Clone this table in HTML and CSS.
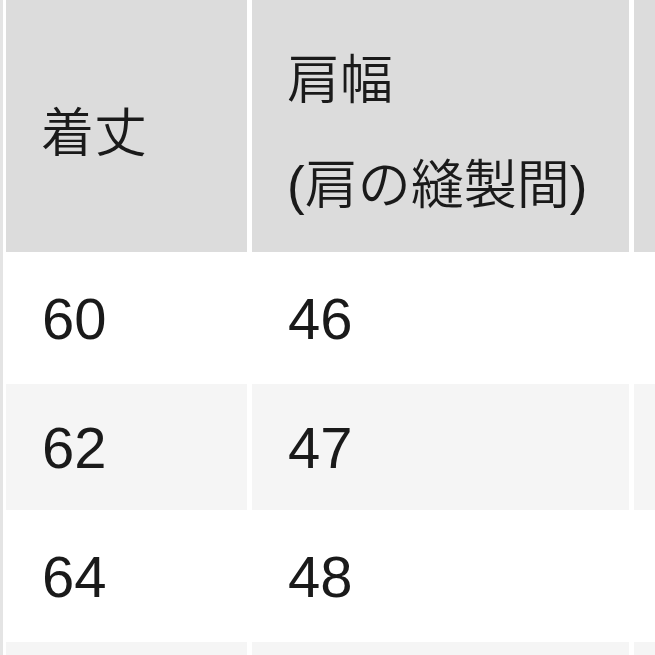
FILE: index.html
```html
<!DOCTYPE html>
<html lang="ja">
<head>
<meta charset="utf-8">
<link rel="stylesheet" href="styles.css">
</head>
<body>
<div class="frame">
  <div class="table">
    <div class="cell head">着丈</div>
    <div class="cell head">肩幅<br>(肩の縫製間)</div>
    <div class="cell head"></div>

    <div class="cell">60</div>
    <div class="cell">46</div>
    <div class="cell"></div>

    <div class="cell alt">62</div>
    <div class="cell alt">47</div>
    <div class="cell alt"></div>

    <div class="cell">64</div>
    <div class="cell">48</div>
    <div class="cell"></div>

    <div class="cell alt"></div>
    <div class="cell alt"></div>
    <div class="cell alt"></div>
  </div>
</div>
</body>
</html>
```

FILE: styles.css
```css
html, body {
  margin: 0;
  padding: 0;
  background: #ffffff;
}
body {
  width: 655px;
  height: 655px;
  overflow: hidden;
  font-family: "Liberation Sans", "Noto Sans CJK JP", sans-serif;
  color: #1a1a1a;
}
.frame {
  border-left: 3px solid #e4e4e4;
  padding-left: 3px;
  height: 655px;
  overflow: hidden;
}
.table {
  display: grid;
  grid-template-columns: 241px 377px 300px;
  grid-template-rows: 252px 126px 126px 126px 126px;
  column-gap: 5px;
  row-gap: 3px;
}
.cell {
  display: flex;
  align-items: center;
  padding-left: 36px;
  font-size: 58px;
  background: #ffffff;
}
.head {
  background: #dcdcdc;
  font-size: 53px;
  font-weight: 350;
  line-height: 105px;
  padding-top: 14px;
  padding-left: 35px;
}
.alt {
  background: #f5f5f5;
}
```
